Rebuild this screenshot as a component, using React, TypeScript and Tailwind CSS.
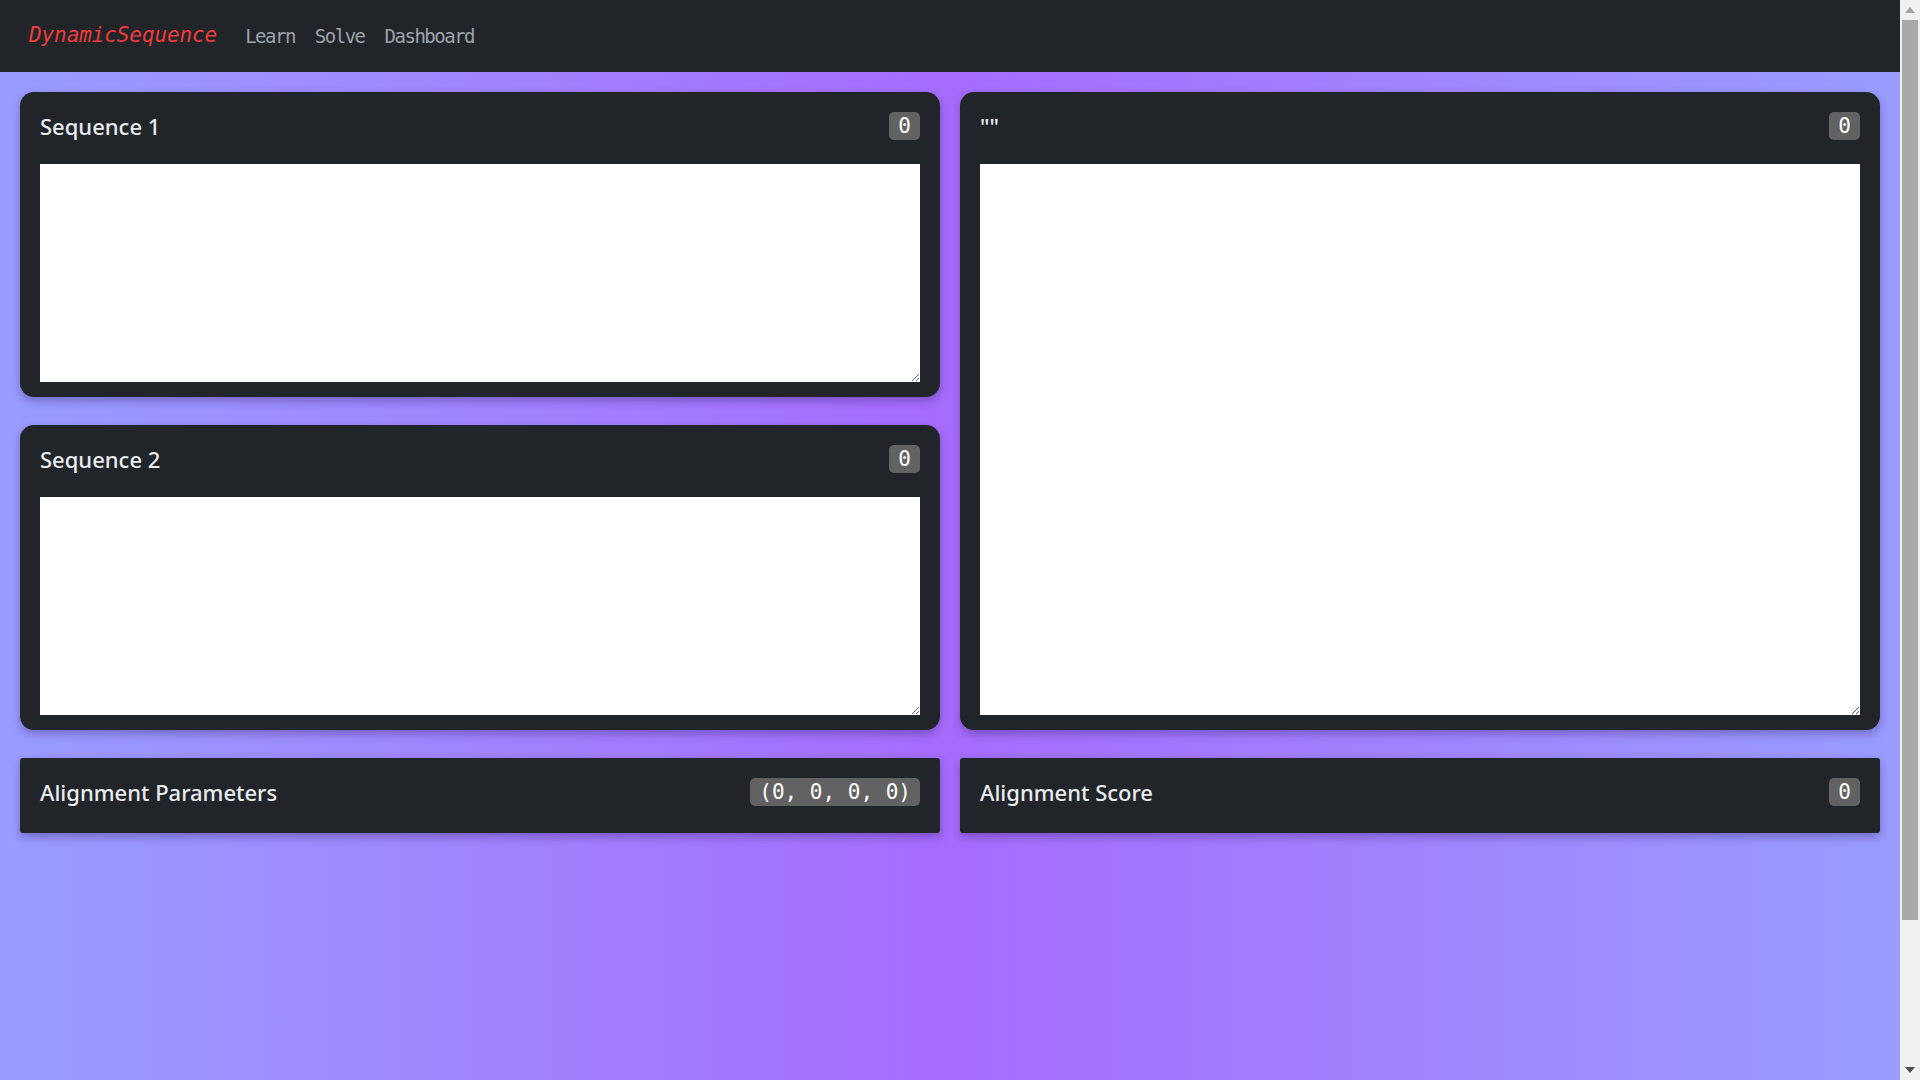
import React from 'react';

const Badge: React.FC<{ value: string }> = ({ value }) => (
  <span className="inline-flex h-[28px] items-center rounded-[5px] bg-[#626262] px-[9px] font-['DejaVu_Sans_Mono',monospace] text-[21px] leading-none text-white">
    {value}
  </span>
);

const SequenceCard: React.FC<{ title: string; grow?: boolean }> = ({ title, grow }) => (
  <div
    className={`flex flex-col rounded-[14px] bg-[#212529] px-5 pb-[15px] shadow-[0_4px_10px_rgba(40,20,90,0.35)] ${grow ? 'h-full' : ''}`}
  >
    <div className="mb-1 flex h-[68px] items-center justify-between">
      <h2 className="font-['Noto_Sans',sans-serif] text-[22px] font-medium text-[#e9ecef]">{title}</h2>
      <Badge value="0" />
    </div>
    <textarea
      className={`block w-full bg-white p-1 text-black outline-none ${grow ? 'flex-1' : 'h-[218px]'}`}
    />
  </div>
);

const InfoCard: React.FC<{ title: string; value: string }> = ({ title, value }) => (
  <div className="flex h-[75px] items-center justify-between rounded-[3px] bg-[#212529] px-5 pb-[7px] shadow-[0_4px_10px_rgba(40,20,90,0.35)]">
    <h2 className="font-['Noto_Sans',sans-serif] text-[22px] font-medium text-[#e9ecef]">{title}</h2>
    <Badge value={value} />
  </div>
);

// classic window scrollbar, as seen in the screenshot
const Scrollbar: React.FC = () => (
  <div className="flex w-[20px] shrink-0 flex-col bg-[#f1f1f1]">
    <div className="flex h-[20px] items-center justify-center">
      <svg width="10" height="6" viewBox="0 0 10 6">
        <path d="M5 0 L10 6 L0 6 Z" fill="#a3a3a3" />
      </svg>
    </div>
    <div className="flex flex-1 flex-col px-[2px] pb-[2px]">
      <div className="h-[900px] bg-[#a8a8a8]" />
    </div>
    <div className="flex h-[20px] items-center justify-center">
      <svg width="10" height="6" viewBox="0 0 10 6">
        <path d="M0 0 L10 0 L5 6 Z" fill="#505050" />
      </svg>
    </div>
  </div>
);

export default function App() {
  return (
    <div className="flex h-screen overflow-hidden">
      <div className="min-w-0 flex-1 overflow-hidden">
        <div className="min-h-[1250px] bg-[linear-gradient(90deg,#9a9dff_0%,#a66cfd_50%,#9a9dff_100%)]">
          <nav className="flex h-[72px] items-center gap-[21px] bg-[#212529] pl-[29px]">
            <a className="font-['DejaVu_Sans_Mono',monospace] text-[21px] italic tracking-[-0.1px] text-[#ee3b3b]">
              DynamicSequence
            </a>
            <div className="ml-[7px] flex items-center gap-[20px] font-['DejaVu_Sans_Mono',monospace] text-[19px] tracking-[-1.5px] text-[#9da3a9]">
              <a>Learn</a>
              <a>Solve</a>
              <a>Dashboard</a>
            </div>
          </nav>

          <main className="px-5 pt-5">
            <div className="grid grid-cols-2 gap-x-5 gap-y-[28px]">
              <div className="flex flex-col gap-[28px]">
                <SequenceCard title="Sequence 1" />
                <SequenceCard title="Sequence 2" />
              </div>
              <SequenceCard title={'""'} grow />
              <InfoCard title="Alignment Parameters" value="(0, 0, 0, 0)" />
              <InfoCard title="Alignment Score" value="0" />
            </div>
          </main>
        </div>
      </div>
      <Scrollbar />
    </div>
  );
}
